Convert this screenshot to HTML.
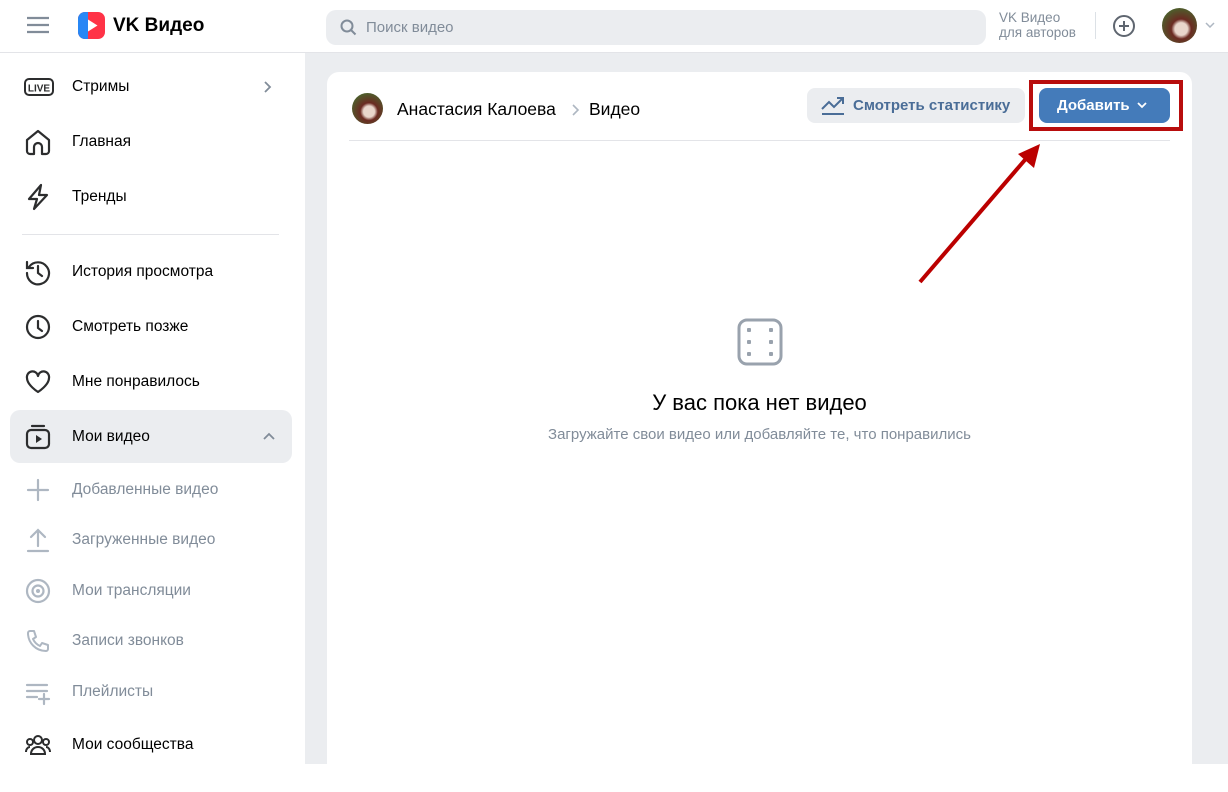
<!DOCTYPE html>
<html><head><meta charset="utf-8"><style>
*{box-sizing:border-box;margin:0;padding:0}
body{width:1228px;height:764px;overflow:hidden;background:#fff;font-family:"Liberation Sans",Arial,sans-serif;color:#000;position:relative}
.hdr{position:absolute;left:0;top:0;width:1228px;height:53px;background:#fff;border-bottom:1px solid #e3e4e8}
.side{position:absolute;left:0;top:53px;width:305px;height:711px;background:#fff}
.main{position:absolute;left:305px;top:53px;width:923px;height:711px;background:#ebedf0}
.card{position:absolute;left:22px;top:19px;width:865px;height:720px;background:#fff;border-radius:12px}
.it{position:absolute;left:0;width:305px;height:52px;font-size:15.5px;color:#000}
.it span{position:absolute;left:72px;top:50%;transform:translateY(-50%)}
.it svg{position:absolute;left:24px;top:50%;transform:translateY(-50%)}
.g span{color:#818c99}
</style></head><body>
<div class="hdr">
<svg style="position:absolute;left:26px;top:15px" width="24" height="20" viewBox="0 0 24 20"><path d="M1 3h22M1 10h22M1 17h22" stroke="#818c99" stroke-width="2.2"/></svg>
<svg style="position:absolute;left:78px;top:12px" width="27" height="27" viewBox="0 0 27 27"><rect width="27" height="27" rx="7" fill="#ff3347"/><path d="M0 7a7 7 0 0 1 7-7h3v27H7a7 7 0 0 1-7-7z" fill="#2787f5"/><path d="M10 7.5v12l9.5-6z" fill="#fff"/></svg>
<div style="position:absolute;left:113px;top:15px;font-size:19px;font-weight:bold;color:#000">VK Видео</div>
<div style="position:absolute;left:326px;top:10px;width:660px;height:35px;border-radius:10px;background:#ebedf0"></div>
<svg style="position:absolute;left:340px;top:19px" width="17" height="17" viewBox="0 0 17 17"><circle cx="7" cy="7" r="5.5" fill="none" stroke="#818c99" stroke-width="2"/><path d="M11 11l4.5 4.5" stroke="#818c99" stroke-width="2"/></svg>
<div style="position:absolute;left:366px;top:19px;font-size:15px;color:#818c99">Поиск видео</div>
<div style="position:absolute;left:999px;top:10px;font-size:13.5px;line-height:15px;color:#818c99">VK Видео<br>для авторов</div>
<div style="position:absolute;left:1095px;top:12px;width:1px;height:27px;background:#dce1e6"></div>
<svg style="position:absolute;left:1112px;top:14px" width="24" height="24" viewBox="0 0 24 24"><circle cx="12" cy="12" r="10" fill="none" stroke="#5f6670" stroke-width="2"/><path d="M12 7v10M7 12h10" stroke="#5f6670" stroke-width="2"/></svg>
<div style="position:absolute;left:1162px;top:8px;width:35px;height:35px;border-radius:50%;background:radial-gradient(circle at 55% 60%,#e9d6cc 0 22%,#6b2a22 35%,#4d5f2c 75%)"></div>
<svg style="position:absolute;left:1205px;top:22px" width="10" height="6" viewBox="0 0 10 6"><path d="M1 1l4 4 4-4" fill="none" stroke="#aeb7c2" stroke-width="1.5"/></svg>
</div>
<div class="side">
<div class="it" style="top:8px"><svg width="30" height="20" viewBox="0 0 30 20"><rect x="1" y="2" width="28" height="16" rx="4" fill="none" stroke="#2c2d2e" stroke-width="2"/><text x="15" y="14.5" font-size="10" font-weight="bold" text-anchor="middle" fill="#2c2d2e" font-family="Liberation Sans">LIVE</text></svg><span>Стримы</span><svg style="left:262px" width="10" height="14" viewBox="0 0 10 14"><path d="M3 2l5 5-5 5" fill="none" stroke="#818c99" stroke-width="1.8"/></svg></div>
<div class="it" style="top:63px"><svg width="28" height="28" viewBox="0 0 28 28"><path d="M3 12l11-9 11 9v11a3 3 0 0 1-3 3h-4v-7a4 4 0 0 0-8 0v7H6a3 3 0 0 1-3-3z" fill="none" stroke="#2c2d2e" stroke-width="2.2" stroke-linejoin="round"/></svg><span>Главная</span></div>
<div class="it" style="top:118px"><svg width="28" height="28" viewBox="0 0 28 28"><path d="M17 2L5 16h8l-3 10 13-14h-8z" fill="none" stroke="#2c2d2e" stroke-width="2.2" stroke-linejoin="round"/></svg><span>Тренды</span></div>
<div style="position:absolute;left:22px;top:181px;width:257px;height:1px;background:#e3e4e8"></div>
<div class="it" style="top:193px"><svg width="28" height="28" viewBox="0 0 28 28"><path d="M5 9A11 11 0 1 1 3 15M3 4v6h6M14 8v7l4 3" fill="none" stroke="#2c2d2e" stroke-width="2.2" stroke-linecap="round"/></svg><span>История просмотра</span></div>
<div class="it" style="top:248px"><svg width="28" height="28" viewBox="0 0 28 28"><circle cx="14" cy="14" r="11" fill="none" stroke="#2c2d2e" stroke-width="2.2"/><path d="M14 8v7l4 3" fill="none" stroke="#2c2d2e" stroke-width="2.2" stroke-linecap="round"/></svg><span>Смотреть позже</span></div>
<div class="it" style="top:303px"><svg width="28" height="28" viewBox="0 0 28 28"><path d="M14 24S3 17 3 10a5.5 5.5 0 0 1 11-2 5.5 5.5 0 0 1 11 2c0 7-11 14-11 14z" fill="none" stroke="#2c2d2e" stroke-width="2.2" stroke-linejoin="round"/></svg><span>Мне понравилось</span></div>
<div style="position:absolute;left:10px;top:357px;width:282px;height:53px;border-radius:10px;background:#ebedf0"></div>
<div class="it" style="top:358px"><svg width="28" height="28" viewBox="0 0 28 28"><rect x="3" y="7" width="22" height="18" rx="4" fill="none" stroke="#2c2d2e" stroke-width="2.2"/><path d="M8 3h12" stroke="#2c2d2e" stroke-width="2.2" stroke-linecap="round"/><path d="M12 12v8l6-4z" fill="#2c2d2e"/></svg><span>Мои видео</span><svg style="left:262px" width="14" height="10" viewBox="0 0 14 10"><path d="M2 7l5-5 5 5" fill="none" stroke="#818c99" stroke-width="1.8"/></svg></div>
<div class="it g" style="top:411px"><svg width="28" height="28" viewBox="0 0 28 28"><path d="M14 4v20M4 14h20" stroke="#aeb7c2" stroke-width="2.2" stroke-linecap="round"/></svg><span>Добавленные видео</span></div>
<div class="it g" style="top:461px"><svg width="28" height="28" viewBox="0 0 28 28"><path d="M14 20V5M7 11l7-7 7 7M4 25h20" fill="none" stroke="#aeb7c2" stroke-width="2.2" stroke-linecap="round"/></svg><span>Загруженные видео</span></div>
<div class="it g" style="top:512px"><svg width="28" height="28" viewBox="0 0 28 28"><circle cx="14" cy="14" r="11" fill="none" stroke="#aeb7c2" stroke-width="2.2"/><circle cx="14" cy="14" r="5.5" fill="none" stroke="#aeb7c2" stroke-width="2.2"/><circle cx="14" cy="14" r="2" fill="#aeb7c2"/></svg><span>Мои трансляции</span></div>
<div class="it g" style="top:562px"><svg width="28" height="28" viewBox="0 0 28 28"><path d="M6 4l4 0 2 6-3 2a14 14 0 0 0 7 7l2-3 6 2v4a2 2 0 0 1-2 2C12 24 4 16 4 6a2 2 0 0 1 2-2z" fill="none" stroke="#aeb7c2" stroke-width="2" stroke-linejoin="round"/></svg><span>Записи звонков</span></div>
<div class="it g" style="top:613px"><svg width="28" height="28" viewBox="0 0 28 28"><path d="M3 7h20M3 13h20M3 19h10M20 16v10M15 21h10" stroke="#aeb7c2" stroke-width="2.2" stroke-linecap="round"/></svg><span>Плейлисты</span></div>
<div class="it" style="top:666px"><svg width="28" height="28" viewBox="0 0 28 28"><circle cx="14" cy="9" r="4" fill="none" stroke="#2c2d2e" stroke-width="2"/><circle cx="6" cy="11" r="3" fill="none" stroke="#2c2d2e" stroke-width="2"/><circle cx="22" cy="11" r="3" fill="none" stroke="#2c2d2e" stroke-width="2"/><path d="M7 23c0-4 3-7 7-7s7 3 7 7zM2 21c0-3 2-5 4-5M26 21c0-3-2-5-4-5" fill="none" stroke="#2c2d2e" stroke-width="2"/></svg><span>Мои сообщества</span></div>
</div>
<div class="main"><div class="card">
<div style="position:absolute;left:25px;top:21px;width:31px;height:31px;border-radius:50%;background:radial-gradient(circle at 55% 60%,#e9d6cc 0 22%,#6b2a22 35%,#4d5f2c 75%)"></div>
<div style="position:absolute;left:70px;top:27px;font-size:17.5px;color:#000">Анастасия Калоева</div>
<svg style="position:absolute;left:243px;top:31px" width="10" height="14" viewBox="0 0 10 14"><path d="M3 2l5 5-5 5" fill="none" stroke="#aeb7c2" stroke-width="1.6"/></svg>
<div style="position:absolute;left:262px;top:27px;font-size:17.5px;color:#000">Видео</div>
<div style="position:absolute;left:480px;top:16px;width:218px;height:35px;border-radius:8px;background:#ebedf0"></div>
<svg style="position:absolute;left:494px;top:23px" width="24" height="20" viewBox="0 0 24 20"><path d="M1 14l7-7 5 5 9-9M16 3h6v6M1 19h22" fill="none" stroke="#4a6d97" stroke-width="2"/></svg>
<div style="position:absolute;left:526px;top:25px;font-size:15px;font-weight:bold;color:#4a6d97">Смотреть статистику</div>
<div style="position:absolute;left:702px;top:8px;width:154px;height:51px;border:4px solid #b80d0d"></div>
<div style="position:absolute;left:712px;top:16px;width:131px;height:35px;border-radius:8px;background:#447bba"></div>
<div style="position:absolute;left:730px;top:25px;font-size:15px;font-weight:bold;color:#fff">Добавить</div>
<svg style="position:absolute;left:809px;top:29px" width="12" height="8" viewBox="0 0 12 8"><path d="M2 2l4 4 4-4" fill="none" stroke="#fff" stroke-width="1.8"/></svg>
<div style="position:absolute;left:22px;top:68px;width:821px;height:1px;background:#e3e4e8"></div>
<svg style="position:absolute;left:585px;top:68px" width="140" height="150" viewBox="0 0 140 150"><path d="M8 142L118 14" stroke="#b00" stroke-width="4"/><path d="M128 4L106 14l16 14z" fill="#b00"/></svg>
<svg style="position:absolute;left:410px;top:246px" width="46" height="48" viewBox="0 0 46 48"><rect x="2" y="2" width="42" height="44" rx="8" fill="none" stroke="#99a2ad" stroke-width="3"/><g fill="#99a2ad"><rect x="10" y="10" width="4" height="4" rx="1"/><rect x="10" y="22" width="4" height="4" rx="1"/><rect x="10" y="34" width="4" height="4" rx="1"/><rect x="32" y="10" width="4" height="4" rx="1"/><rect x="32" y="22" width="4" height="4" rx="1"/><rect x="32" y="34" width="4" height="4" rx="1"/></g></svg>
<div style="position:absolute;left:0;width:865px;top:318px;text-align:center;font-size:22px;color:#000">У вас пока нет видео</div>
<div style="position:absolute;left:0;width:865px;top:354px;text-align:center;font-size:15px;color:#818c99">Загружайте свои видео или добавляйте те, что понравились</div>
</div></div>
</body></html>
